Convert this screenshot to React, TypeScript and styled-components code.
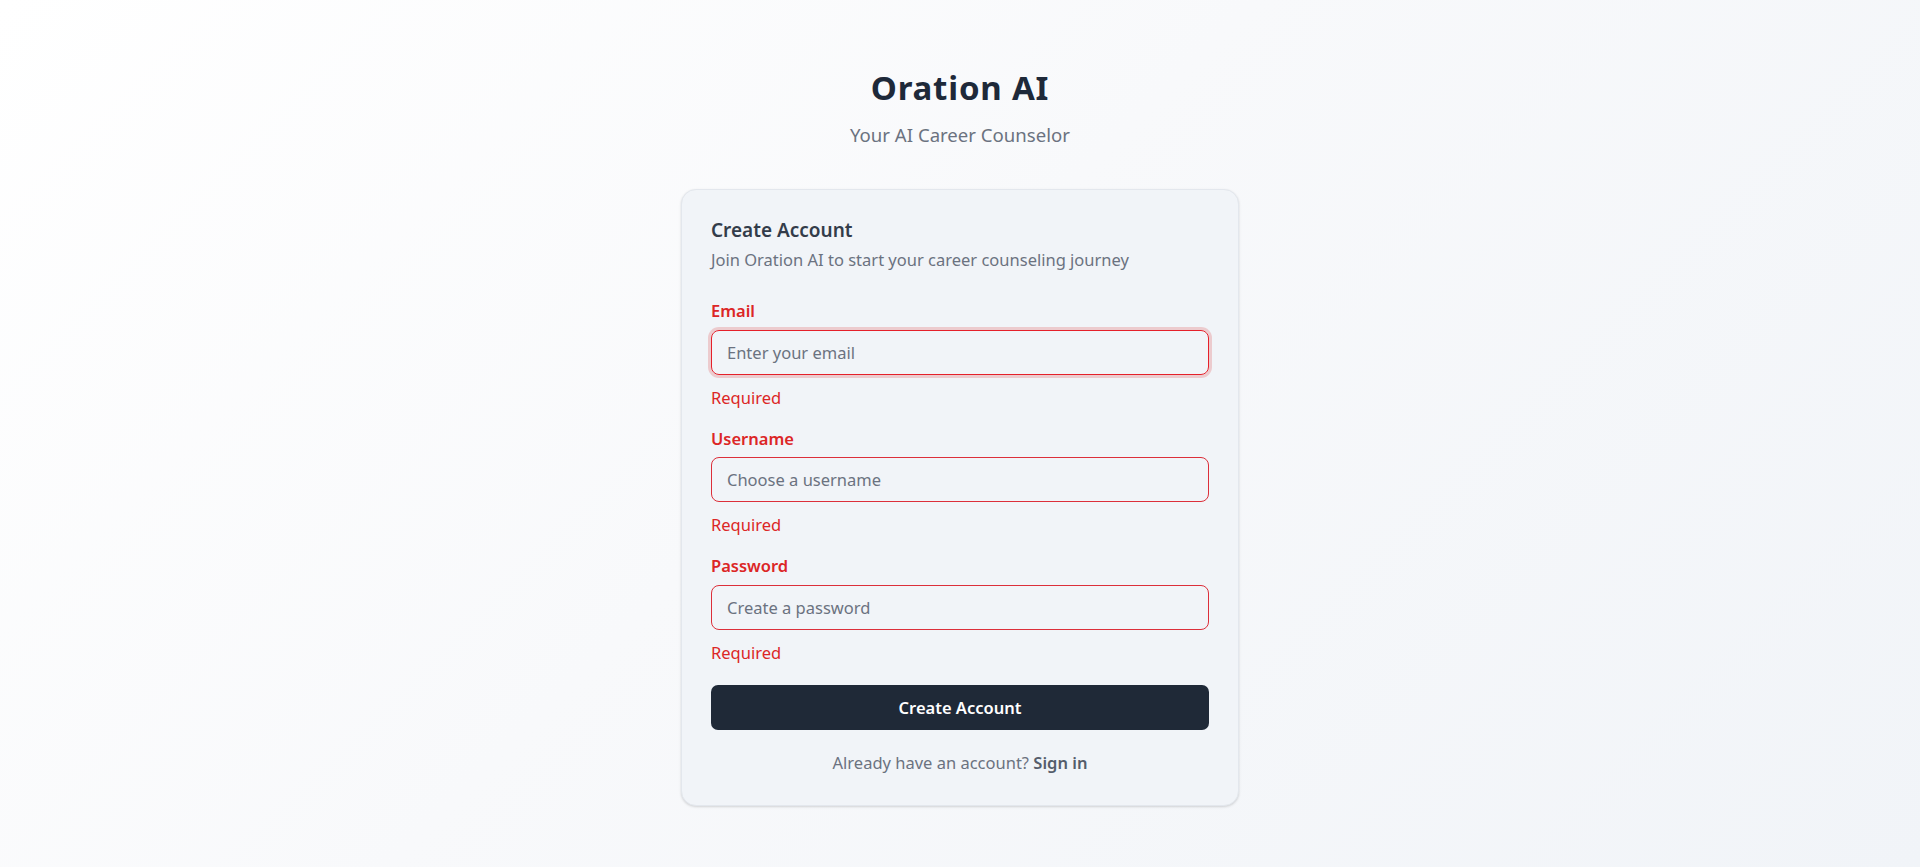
import React from "react";
import styled, { createGlobalStyle } from "styled-components";

const GlobalStyle = createGlobalStyle`
  html, body {
    margin: 0;
    padding: 0;
  }
  body {
    font-family: "Noto Sans", "Open Sans", sans-serif;
    -webkit-font-smoothing: antialiased;
  }
  * { box-sizing: border-box; }
`;

const Page = styled.main`
  min-height: 100vh;
  display: flex;
  flex-direction: column;
  align-items: center;
  padding-top: 68px;
  background: linear-gradient(135deg, #ffffff 0%, #f8f9fb 45%, #f1f4f8 100%);
`;

const Brand = styled.header`
  display: flex;
  flex-direction: column;
  align-items: center;
  margin-bottom: 40px;
`;

const BrandTitle = styled.h1`
  margin: 0 0 13px;
  font-size: 33px;
  line-height: 40px;
  letter-spacing: 0.8px;
  font-weight: 700;
  color: #1e2939;
`;

const BrandSubtitle = styled.p`
  margin: 0;
  font-size: 18.6px;
  line-height: 28px;
  color: #6b7280;
`;

const Card = styled.section`
  width: 558px;
  border: 1px solid #e3e7ed;
  border-radius: 15px;
  background: #f1f4f8;
  box-shadow: 0 1px 3px rgba(0, 0, 0, 0.1), 0 1px 2px rgba(0, 0, 0, 0.06);
  padding: 30px 29px 30px;
  display: flex;
  flex-direction: column;
`;

const CardHeader = styled.div`
  display: flex;
  flex-direction: column;
  gap: 7px;
  margin-bottom: 30px;
`;

const CardTitle = styled.h2`
  margin: 0;
  font-size: 19px;
  line-height: 20px;
  font-weight: 600;
  color: #333c4a;
`;

const CardDescription = styled.p`
  margin: 0;
  font-size: 16.5px;
  line-height: 25px;
  color: #6b7280;
`;

const Form = styled.form`
  display: flex;
  flex-direction: column;
  gap: 20px;
`;

const Field = styled.div`
  display: flex;
  flex-direction: column;
  gap: 10px;
`;

const Label = styled.label`
  font-size: 16.5px;
  line-height: 17.5px;
  font-weight: 600;
  color: #dc2626;
`;

const Input = styled.input<{ $focused?: boolean }>`
  height: 45px;
  width: 100%;
  border-radius: 8px;
  border: 1px solid ${(p) => (p.$focused ? "#e5202a" : "#dc2f3a")};
  background: transparent;
  padding: 0 15px;
  font-family: inherit;
  font-size: 16.5px;
  color: #1f2937;
  outline: none;
  box-shadow: ${(p) => (p.$focused ? "0 0 0 3px rgba(220, 38, 38, 0.2)" : "none")};
  &::placeholder {
    color: #6b7280;
  }
`;

const ErrorText = styled.p`
  margin: 0;
  font-size: 16.5px;
  line-height: 25px;
  color: #dc2626;
`;

const SubmitButton = styled.button`
  height: 45px;
  width: 100%;
  border: none;
  border-radius: 7px;
  background: #1f2937;
  color: #ffffff;
  font-family: inherit;
  font-size: 16.5px;
  font-weight: 600;
  cursor: pointer;
`;

const Footer = styled.p`
  margin: 20px 0 0;
  text-align: center;
  font-size: 16.5px;
  line-height: 25px;
  color: #6b7280;
`;

const FooterLink = styled.a`
  font-weight: 600;
  color: #555d6b;
  text-decoration: none;
`;

type FieldDef = {
  id: string;
  label: string;
  type: string;
  placeholder: string;
  focused?: boolean;
};

const fields: FieldDef[] = [
  { id: "email", label: "Email", type: "email", placeholder: "Enter your email", focused: true },
  { id: "username", label: "Username", type: "text", placeholder: "Choose a username" },
  { id: "password", label: "Password", type: "password", placeholder: "Create a password" },
];

export default function App() {
  return (
    <>
      <GlobalStyle />
      <Page>
        <Brand>
          <BrandTitle>Oration AI</BrandTitle>
          <BrandSubtitle>Your AI Career Counselor</BrandSubtitle>
        </Brand>
        <Card>
          <CardHeader>
            <CardTitle>Create Account</CardTitle>
            <CardDescription>Join Oration AI to start your career counseling journey</CardDescription>
          </CardHeader>
          <Form onSubmit={(e) => e.preventDefault()}>
            {fields.map((f) => (
              <Field key={f.id}>
                <Label htmlFor={f.id}>{f.label}</Label>
                <Input id={f.id} type={f.type} placeholder={f.placeholder} $focused={f.focused} />
                <ErrorText>Required</ErrorText>
              </Field>
            ))}
            <SubmitButton type="submit">Create Account</SubmitButton>
          </Form>
          <Footer>
            Already have an account? <FooterLink href="#">Sign in</FooterLink>
          </Footer>
        </Card>
      </Page>
    </>
  );
}
